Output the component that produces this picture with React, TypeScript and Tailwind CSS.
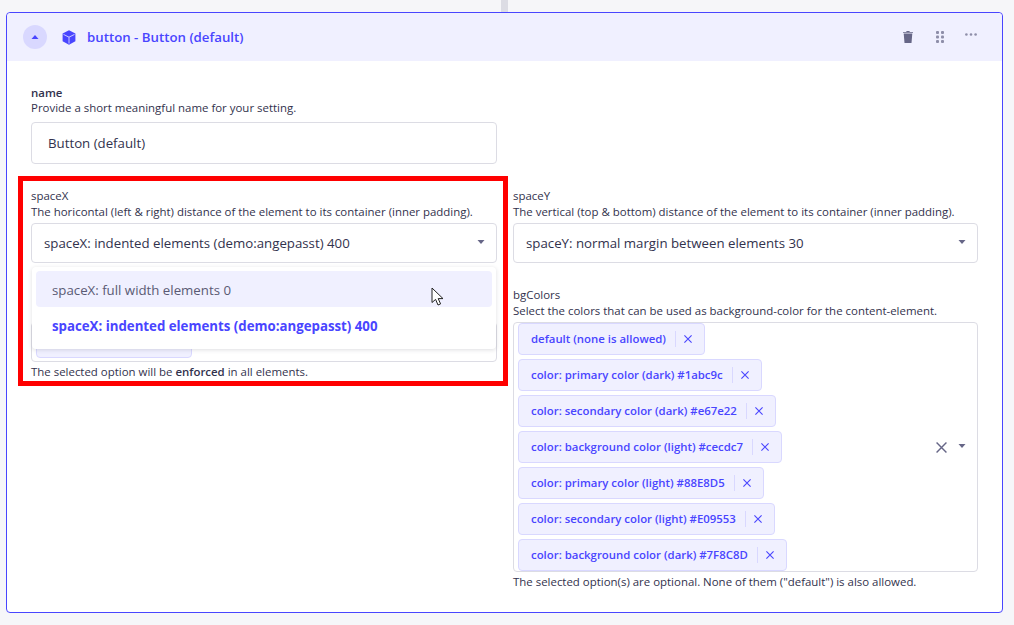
const font = { fontFamily: '"Open Sans", sans-serif' };

function Caret({ className = '', down = false }: { className?: string; down?: boolean }) {
  return (
    <svg width="8" height="4" viewBox="0 0 8 4" className={className}>
      <path d={down ? 'M0.5 0H7.5L4 4Z' : 'M0.5 4H7.5L4 0Z'} fill="currentColor" />
    </svg>
  );
}

function CrossIcon({ size = 10 }: { size?: number }) {
  return (
    <svg width={size} height={size} viewBox="0 0 10 10" fill="none" stroke="currentColor" strokeWidth={size > 10 ? 1.3 : 1.4}>
      <path d="M0.5 0.5L9.5 9.5M9.5 0.5L0.5 9.5" />
    </svg>
  );
}

function CubeIcon() {
  return (
    <svg width="14" height="15" viewBox="0 0 14 15">
      <path d="M7 0.3L13.4 3.6V11.2L7 14.7L0.6 11.2V3.6Z" fill="#4945ff" />
      <path d="M1.5 4.4L7 7.2L12.5 4.4M7 7.2V13.6" fill="none" stroke="#d9d8ff" strokeWidth="0.9" />
    </svg>
  );
}

function TrashIcon() {
  return (
    <svg width="10" height="12" viewBox="0 0 10 12" fill="#666687">
      <path d="M3.6 0H6.4L6.8 0.9H10V1.8H0V0.9H3.2Z" />
      <path d="M0.7 2.6H9.3L8.5 12H1.5Z" />
    </svg>
  );
}

function DragIcon() {
  return (
    <svg width="8" height="12" viewBox="0 0 8 12" fill="#8e8ea9">
      <rect x="0" y="0" width="3" height="3" rx="1" />
      <rect x="5" y="0" width="3" height="3" rx="1" />
      <rect x="0" y="4.5" width="3" height="3" rx="1" />
      <rect x="5" y="4.5" width="3" height="3" rx="1" />
      <rect x="0" y="9" width="3" height="3" rx="1" />
      <rect x="5" y="9" width="3" height="3" rx="1" />
    </svg>
  );
}

function MoreIcon() {
  return (
    <svg width="12" height="3" viewBox="0 0 12 3" fill="#8e8ea9">
      <circle cx="1.4" cy="1.5" r="1.3" />
      <circle cx="6" cy="1.5" r="1.3" />
      <circle cx="10.6" cy="1.5" r="1.3" />
    </svg>
  );
}

function CursorIcon() {
  return (
    <svg width="14" height="20" viewBox="0 0 14 20">
      <path
        d="M1 1V15.5L4.6 12.4L7 18L9.6 16.9L7.2 11.6H12Z"
        fill="#ffffff"
        stroke="#222222"
        strokeWidth="1"
        strokeLinejoin="miter"
      />
    </svg>
  );
}

function FieldHead({ label, desc }: { label: string; desc: string }) {
  return (
    <div className="h-[34px] text-[11.45px] leading-[15px] text-[#32324d]">
      <div className="h-[15px] leading-[13px]">{label}</div>
      <div>{desc}</div>
    </div>
  );
}

function Select({ value }: { value: string }) {
  return (
    <div className="h-10 flex items-center justify-between pl-3 pr-[11px] bg-white border border-[#dcdce4] rounded text-[13.25px] text-[#32324d]">
      <span className="pt-[2px]">{value}</span>
      <Caret down className="text-[#666687] mb-[2px]" />
    </div>
  );
}

const chips = [
  'default (none is allowed)',
  'color: primary color (dark) #1abc9c',
  'color: secondary color (dark) #e67e22',
  'color: background color (light) #cecdc7',
  'color: primary color (light) #88E8D5',
  'color: secondary color (light) #E09553',
  'color: background color (dark) #7F8C8D',
];

function Chip({ text }: { text: string }) {
  return (
    <div className="h-8 w-fit flex items-center bg-[#f0f0ff] border border-[#d9d8ff] rounded pl-3 pr-3 text-[11.4px] font-semibold text-[#4945ff]">
      <span>{text}</span>
      <span className="w-px h-[16px] bg-[#d9d8ff] ml-[9px] mr-2" />
      <span className="text-[#4945ff]">
        <CrossIcon size={8} />
      </span>
    </div>
  );
}

export default function App() {
  return (
    <div className="min-h-screen bg-[#f6f6f9] pl-[6px] pr-[11px] overflow-hidden" style={font}>
      <div className="ml-[495px] w-[7px] h-3 bg-[#dcdce4]" />

      <div className="relative h-[601px] bg-white border border-[#4945ff] rounded">
        {/* Header */}
        <div className="h-12 flex items-center justify-between bg-[#f0f0ff] pl-4 pr-[25px] rounded-t">
          <div className="flex items-center">
            <div className="w-6 h-6 rounded-full bg-[#d9d8ff] flex items-center justify-center text-[#4945ff]">
              <Caret />
            </div>
            <div className="ml-[15px] mr-[11px]">
              <CubeIcon />
            </div>
            <span className="pt-[2px] text-[13.25px] font-semibold text-[#4945ff]">button - Button (default)</span>
          </div>
          <div className="flex items-center">
            <TrashIcon />
            <div className="ml-[23px]">
              <DragIcon />
            </div>
            <div className="ml-[21px] mb-[5px]">
              <MoreIcon />
            </div>
          </div>
        </div>

        {/* Body */}
        <div className="pt-6 px-6">
          <div className="w-[466px]">
            <div className="h-[37px] text-[11.45px] leading-[15px] text-[#32324d]">
              <div className="font-semibold">name</div>
              <div>Provide a short meaningful name for your setting.</div>
            </div>
            <div className="h-[42px] flex items-center px-4 border border-[#dcdce4] rounded text-[13.25px] text-[#32324d]">
              <span className="pt-[2px]">Button (default)</span>
            </div>
          </div>

          <div className="mt-[25px] grid grid-cols-[466px_465px] gap-x-4">
            {/* Left column */}
            <div>
              <FieldHead label="spaceX" desc="The horicontal (left & right) distance of the element to its container (inner padding)." />
              <div className="relative">
                <Select value="spaceX: indented elements (demo:angepasst) 400" />
                <div className="absolute z-10 left-px right-px top-[44px] h-[82px] bg-white rounded p-1 shadow-[0_1px_4px_rgba(33,33,52,0.15)]">
                  <div className="h-9 flex items-center pl-4 pt-1 bg-[#f0f0ff] rounded text-[13.25px] text-[#5a5a74]">
                    spaceX: full width elements 0
                  </div>
                  <div className="h-9 flex items-center pl-4 pt-1 text-[13.25px] font-bold text-[#4945ff]">
                    spaceX: indented elements (demo:angepasst) 400
                  </div>
                </div>
              </div>
              <div className="mt-[59px] h-10 border border-[#dcdce4] rounded px-1 pt-[3px]">
                <div className="h-8 w-[156px] bg-[#f0f0ff] border border-[#d9d8ff] rounded" />
              </div>
              <p className="mt-[2px] text-[11.45px] leading-[15px] text-[#32324d]">
                The selected option will be <span className="font-semibold">enforced</span> in all elements.
              </p>
            </div>

            {/* Right column */}
            <div>
              <FieldHead label="spaceY" desc="The vertical (top & bottom) distance of the element to its container (inner padding)." />
              <Select value="spaceY: normal margin between elements 30" />
              <div className="mt-[25px]">
                <FieldHead label="bgColors" desc="Select the colors that can be used as background-color for the content-element." />
              </div>
              <div className="flex items-center justify-between h-[250px] border border-[#dcdce4] rounded pl-1 pr-[11px]">
                <div className="flex flex-col gap-1">
                  {chips.map((chip) => (
                    <Chip key={chip} text={chip} />
                  ))}
                </div>
                <div className="flex items-center gap-[11px] text-[#666687]">
                  <CrossIcon size={11} />
                  <Caret down className="mb-[2px]" />
                </div>
              </div>
              <p className="mt-[2px] text-[11.45px] leading-[15px] text-[#32324d]">
                The selected option(s) are optional. None of them ("default") is also allowed.
              </p>
            </div>
          </div>
        </div>

        {/* Red annotation frame */}
        <div className="absolute z-20 left-[11px] top-[163px] w-[490px] h-[210px] border-[5px] border-[#ff0000] pointer-events-none" />
        {/* Mouse cursor */}
        <div className="absolute z-20 left-[424px] top-[274px]">
          <CursorIcon />
        </div>
      </div>
    </div>
  );
}
